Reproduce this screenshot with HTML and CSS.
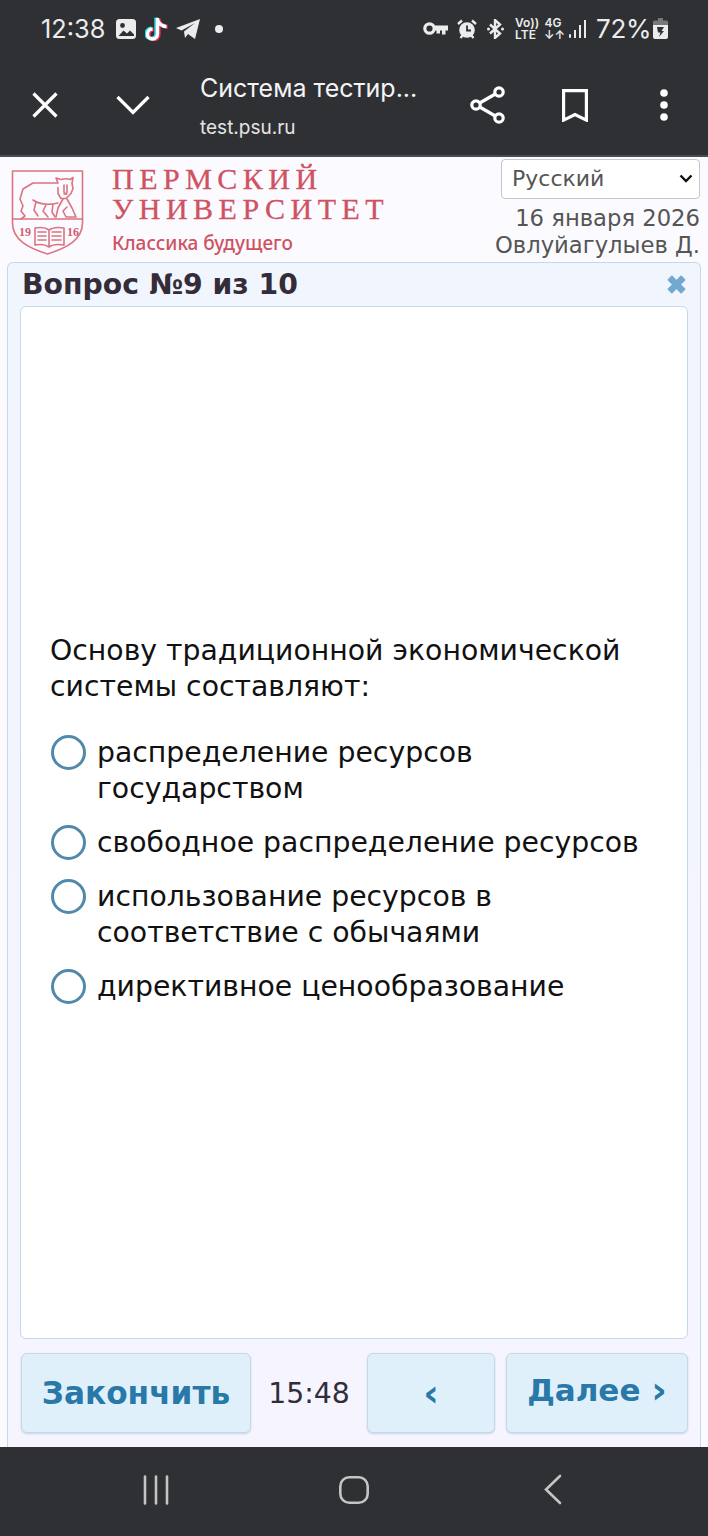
FILE: index.html
```html
<!DOCTYPE html>
<html lang="ru">
<head>
<meta charset="utf-8">
<title>Система тестирования</title>
<link rel="stylesheet" href="styles.css">
</head>
<body>
<div class="chrome">
  <div class="status">
    <span class="time">12:38</span>
    <svg class="ic-image" width="20" height="20" viewBox="0 0 20 20"><rect width="20" height="20" rx="3.5" fill="#ececec"/><circle cx="6.5" cy="6.5" r="2.4" fill="#2f3033"/><path d="M2.500 17l5-5.500 3.500 3 3-3 4 4V17z" fill="#2f3033"/></svg>
    <svg class="ic-tiktok" width="24" height="24" viewBox="0 0 24 24">
      <g fill="none" stroke-width="4">
        <path d="M12.500 1V17a5 5 0 1 1-5-5M12.500 2c.5 4 4 7.500 9 7.500" stroke="#25d8e0" transform="translate(-1.200 -.4)"/>
        <path d="M12.500 1V17a5 5 0 1 1-5-5M12.500 2c.5 4 4 7.500 9 7.500" stroke="#f02a50" transform="translate(1.200 .6)"/>
        <path d="M12.500 1V17a5 5 0 1 1-5-5M12.500 2c.5 4 4 7.500 9 7.500" stroke="#fff" stroke-width="3.400"/>
      </g>
    </svg>
    <svg class="ic-plane" width="24" height="20" viewBox="0 0 24 20"><path d="M24 0L19 20 12 15 9 19 8 12.500 19 4 5.500 11.500 0 9z" fill="#ececec"/></svg>
    <span class="dot"></span>
    <span class="spacer"></span>
    <svg class="ic-key" width="25" height="13" viewBox="0 0 25 13"><circle cx="6.500" cy="6.500" r="4.700" fill="none" stroke="#ececec" stroke-width="3.200"/><path d="M10 3.500h15v5h-2.500v4h-3.500v-4h-2v3h-3.500v-3H10z" fill="#ececec"/></svg>
    <svg class="ic-alarm" width="20" height="20" viewBox="0 0 20 20"><circle cx="10" cy="11" r="7.800" fill="#ececec"/><path d="M10 6.500V11.500H14" fill="none" stroke="#2f3033" stroke-width="1.800"/><path d="M1 5l4-3.500M19 5l-4-3.500M3.500 19l2-2.500M16.500 19l-2-2.500" stroke="#ececec" stroke-width="2.400"/></svg>
    <svg class="ic-bt" width="17" height="20" viewBox="0 0 17 20"><path d="M3 5.500l10 9-5 4.500V1l5 4.500-10 9" fill="none" stroke="#ececec" stroke-width="2.400"/><circle cx="1.500" cy="10" r="1.500" fill="#ececec"/><circle cx="15.500" cy="10" r="1.500" fill="#ececec"/></svg>
    <span class="tiny volte">Vo)) LTE</span>
    <span class="tiny net">4G ↓↑</span>
    <svg class="ic-signal" width="18" height="18" viewBox="0 0 18 18"><rect x="0" y="14" width="2" height="4" rx="1" fill="#ececec"/><rect x="5" y="10" width="2" height="8" fill="#ececec"/><rect x="10" y="5" width="2" height="13" fill="#ececec"/><rect x="15" y="0" width="2" height="18" fill="#ececec"/></svg>
    <span class="batt-text">72%</span>
    <svg class="ic-batt" width="15" height="21" viewBox="0 0 15 21"><path d="M5 0h5v2.500h3.500a1.500 1.500 0 0 1 1.500 1.500v3H0V4a1.500 1.500 0 0 1 1.500-1.500H5z" fill="#77787a"/><path d="M0 7h15v12a2 2 0 0 1-2 2H2a2 2 0 0 1-2-2z" fill="#ececec"/><path d="M4 9h7L8.500 13H11L6 19l1.500-4.500H5z" fill="#2f3033"/></svg>
  </div>
  <div class="toolbar">
    <svg class="tb-x" width="28" height="28" viewBox="0 0 28 28"><path d="M2.500 2.500l23 23M25.500 2.500l-23 23" stroke="#fff" stroke-width="3.200" fill="none"/></svg>
    <svg class="tb-down" width="34" height="20" viewBox="0 0 34 20"><path d="M1.500 2L17 17.500 32.500 2" stroke="#fff" stroke-width="3.200" fill="none"/></svg>
    <div class="tb-title">
      <div class="tb-name">Система тестир...</div>
      <div class="tb-url">test.psu.ru</div>
    </div>
    <svg class="tb-share" width="36" height="38" viewBox="0 0 36 38"><g fill="none" stroke="#fff" stroke-width="3.200"><circle cx="6" cy="19" r="4.200"/><circle cx="29" cy="6" r="4.200"/><circle cx="29" cy="32" r="4.200"/><path d="M9.700 17L25.300 8M9.700 21L25.300 30"/></g></svg>
    <svg class="tb-mark" width="26" height="33" viewBox="0 0 26 33"><path d="M1.600 1.600h22.800v29.500L13 25.500 1.600 31.100z" fill="none" stroke="#fff" stroke-width="3.200"/></svg>
    <svg class="tb-dots" width="10" height="32" viewBox="0 0 10 32"><circle cx="5" cy="4" r="3.800" fill="#fff"/><circle cx="5" cy="16" r="3.800" fill="#fff"/><circle cx="5" cy="28" r="3.800" fill="#fff"/></svg>
  </div>
</div>

<header class="site-head">
  <div class="brand">
    <svg class="crest" width="74" height="87" viewBox="0 0 74 87">
      <g fill="none" stroke="#dc7480" stroke-width="1.600" stroke-linejoin="round" stroke-linecap="round">
        <path d="M1.500 2h70v52c0 17-16 25-35 31C17.500 79 1.500 71 1.500 54z"/>
        <path d="M1.500 50h70"/>
        <path d="M47 14l-2-5 5 1.500c3-1 6-1 9 0l3-2-1 6 1 5-2 5-5 5h-5l-3-5v-6M47 14H22l-10 6-3 10 3 7-2 5 4 5-4 3"/>
        <path d="M53 16v7c0 2 3 2 3 0v-7M53 25h3"/>
        <path d="M22 31c7 5 16 5 25 3M25 33l-2 8 4 6M35 36l-3 6 5 6M42 35l-1 8 3 5"/>
        <path d="M52 30l-5 9-2 9M56 30l5 9 4 9H55l-3-6 4-4"/>
        <path d="M38 78c-4-3-9-3-14-2V59c5-1 10-1 14 2 4-3 9-3 15-2v17c-6-1-11-1-15 2zM38 61v17M27 63h8M27 67h8M27 71h8M41 63h9M41 67h9M41 71h9"/>
      </g>
      <text class="crest-year" x="8" y="67">19</text>
      <text class="crest-year" x="56" y="67">16</text>
    </svg>
    <div class="brand-text">
      <div class="brand-name">ПЕРМСКИЙ</div>
      <div class="brand-name">УНИВЕРСИТЕТ</div>
      <div class="brand-tag">Классика будущего</div>
    </div>
  </div>
  <div class="user-box">
    <div class="lang-wrap">
      <select class="lang"><option>Русский</option></select>
      <svg class="lang-chev" width="14" height="9" viewBox="0 0 14 9"><path d="M1.500 1.500L7 7l5.500-5.500" fill="none" stroke="#111" stroke-width="2.400"/></svg>
    </div>
    <div class="meta">16 января 2026</div>
    <div class="meta">Овлуйагулыев Д.</div>
  </div>
</header>

<main class="panel">
  <div class="panel-head">
    <h1 class="panel-title">Вопрос №9 из 10</h1>
    <svg class="close" width="23" height="23" viewBox="0 0 20 20"><path d="M3 6l3-3 4 4 4-4 3 3-4 4 4 4-3 3-4-4-4 4-3-3 4-4z" fill="#74a9cf" stroke="#74a9cf" stroke-width="1.500" stroke-linejoin="round"/></svg>
  </div>
  <section class="question">
    <p class="q-text">Основу традиционной экономической системы составляют:</p>
    <ul class="answers">
      <li class="answer"><span class="radio"></span><span class="a-text">распределение ресурсов государством</span></li>
      <li class="answer"><span class="radio"></span><span class="a-text">свободное распределение ресурсов</span></li>
      <li class="answer"><span class="radio"></span><span class="a-text">использование ресурсов в соответствие с обычаями</span></li>
      <li class="answer"><span class="radio"></span><span class="a-text">директивное ценообразование</span></li>
    </ul>
  </section>
  <div class="actions">
    <button class="btn btn-finish">Закончить</button>
    <span class="timer">15:48</span>
    <button class="btn btn-prev"><span class="chev">‹</span></button>
    <button class="btn btn-next">Далее <span class="chev chev-low">›</span></button>
  </div>
</main>

<nav class="navbar">
  <svg width="28" height="30" viewBox="0 0 28 30"><path d="M3 1.500v27M14 1.500v27M25 1.500v27" stroke="#c4c4c6" stroke-width="2.600" stroke-linecap="round"/></svg>
  <svg class="nav-home" width="30" height="30" viewBox="0 0 30 30"><rect x="1.300" y="2.300" width="27.400" height="25.400" rx="9" fill="none" stroke="#c4c4c6" stroke-width="2.600"/></svg>
  <svg class="nav-back" width="18" height="31" viewBox="0 0 18 31"><path d="M16 2L2 15.500 16 29" fill="none" stroke="#c4c4c6" stroke-width="2.600" stroke-linecap="round"/></svg>
</nav>
</body>
</html>
```

FILE: styles.css
```css
* { box-sizing: border-box; }
html, body { margin: 0; padding: 0; }
body {
  width: 708px;
  height: 1536px;
  overflow: hidden;
  display: flex;
  flex-direction: column;
  background: #fbfbff;
  font-family: "DejaVu Sans", sans-serif;
}
.chrome {
  height: 157px;
  background: #2f3033;
  border-bottom: 2px solid #4a4b4e;
  flex: none;
}
.status {
  height: 57px;
  display: flex;
  align-items: center;
  padding-left: 41px;
  padding-right: 40px;
  color: #ececec;
  font-family: Inter, Roboto, sans-serif;
}
.time { font-size: 25.3px; width: 64px; margin-right: 11px; }
.ic-image { margin-right: 9px; }
.ic-tiktok { margin-right: 7px; }
.ic-plane { margin-right: 15px; }
.dot { width: 8px; height: 8px; border-radius: 50%; background: #ececec; }
.spacer { flex: 1; }
.ic-key { margin-right: 9px; }
.ic-alarm { margin-right: 10px; }
.ic-bt { margin-right: 11px; }
.tiny {
  display: block;
  text-align: center;
  font-size: 12px;
  line-height: 11.500px;
  font-weight: 600;
}
.volte { width: 21px; margin-right: 8px; }
.net { width: 18px; margin-right: 7px; }
.ic-signal { margin-right: 9px; }
.batt-text { font-size: 26px; width: 53px; margin-right: 4px; letter-spacing: -0.3px; }
.toolbar {
  height: 98px;
  display: flex;
  align-items: center;
  color: #fff;
  font-family: Inter, Roboto, sans-serif;
  padding-left: 31px;
  padding-bottom: 2px;
}
.tb-x { margin-right: 57px; }
.tb-down { margin-right: 50px; }
.tb-title { width: 253px; padding-top: 2px; }
.tb-name { font-size: 25px; line-height: 32px; color: #f4f4f4; }
.tb-url { font-size: 19px; line-height: 24px; margin-top: 12px; color: #e4e4e4; }
.tb-share { margin-right: 56px; margin-left: 17px; }
.tb-mark { margin-right: 71px; }

.site-head {
  height: 105px;
  flex: none;
  display: flex;
  justify-content: space-between;
  padding: 0 8px 0 11px;
}
.brand { display: flex; align-items: flex-start; padding-top: 12px; }
.crest { margin-right: 27px; }
.crest-year { font-family: "Liberation Serif", serif; font-size: 12px; font-weight: 700; fill: #cf5f6c; }
.brand-text { margin-top: -5px; }
.brand-name {
  font-family: "Liberation Serif", serif;
  font-size: 30px;
  line-height: 30px;
  letter-spacing: 5.500px;
  color: #cf5262;
  white-space: nowrap;
  -webkit-text-stroke: 0.3px #cf5262;
}
.brand-tag {
  font-family: "Noto Sans", sans-serif;
  font-size: 19px;
  font-weight: 500;
  line-height: 24px;
  margin-top: 7px;
  color: #cf5262;
}
.user-box { display: flex; flex-direction: column; align-items: flex-end; padding-top: 2px; }
.lang-wrap { position: relative; margin-bottom: 6px; }
.lang {
  display: block;
  width: 199px;
  height: 40px;
  font-family: "DejaVu Sans", sans-serif;
  font-size: 22px;
  color: #555;
  background: #fff;
  border: 1px solid #c6c6c6;
  border-radius: 4px;
  padding: 0 0 2px 10px;
  appearance: none;
}
.lang-chev { position: absolute; right: 7px; top: 15px; }
.meta { font-size: 22.700px; line-height: 26.500px; color: #555; white-space: nowrap; }

.panel {
  height: 1185px;
  flex: none;
  margin: 0 7px;
  background: linear-gradient(#f1f5fd, #f6f5ff);
  border: 1px solid #c5d9e8;
  border-bottom: 0;
  border-radius: 6px 6px 0 0;
  padding: 0 12px;
  display: flex;
  flex-direction: column;
}
.panel-head {
  height: 43px;
  flex: none;
  display: flex;
  align-items: center;
  justify-content: space-between;
  padding: 0 0 0 2px;
}
.panel-title { margin: 0; font-size: 28.300px; font-weight: 700; color: #342c38; }
.question {
  height: 1033px;
  flex: none;
  background: #fff;
  border: 1px solid #c5d9e8;
  border-radius: 6px;
  padding: 326px 30px 0 29px;
}
.q-text { margin: 0 0 31px; font-size: 28.300px; line-height: 35.700px; color: #111; }
.answers { list-style: none; margin: 0; padding: 0; }
.answer { display: flex; align-items: flex-start; margin-bottom: 18.300px; }
.radio {
  flex: none;
  width: 35px;
  height: 35px;
  border: 3px solid #5189ab;
  border-radius: 50%;
  margin: 0 11px 0 1px;
}
.a-text { font-size: 28.300px; line-height: 35.700px; color: #111; }
.actions {
  display: flex;
  align-items: center;
  margin-top: 14px;
  padding-left: 1px;
}
.btn {
  height: 80px;
  background: #e0f0fb;
  border: 1px solid #c5d9e8;
  border-radius: 6px;
  box-shadow: 0 1px 2px rgba(90, 130, 170, .3);
  font-family: "DejaVu Sans", sans-serif;
  font-weight: 700;
  color: #2878a8;
  padding: 0;
}
.btn-finish { width: 230px; font-size: 31.200px; }
.timer { width: 116px; text-align: center; font-size: 28.300px; color: #332c3a; }
.btn-prev { width: 128px; font-size: 31px; }
.btn-next { width: 182px; margin-left: 11px; font-size: 31px; padding-bottom: 6px; }
.chev { font-size: 38px; line-height: 1; }
.chev-low { vertical-align: -2px; }

.navbar {
  flex: 1;
  background: #2f3033;
  display: flex;
  align-items: center;
  padding: 0 0 4px 142px;
}
.nav-home { margin-left: 169px; }
.nav-back { margin-left: 175px; }
```
